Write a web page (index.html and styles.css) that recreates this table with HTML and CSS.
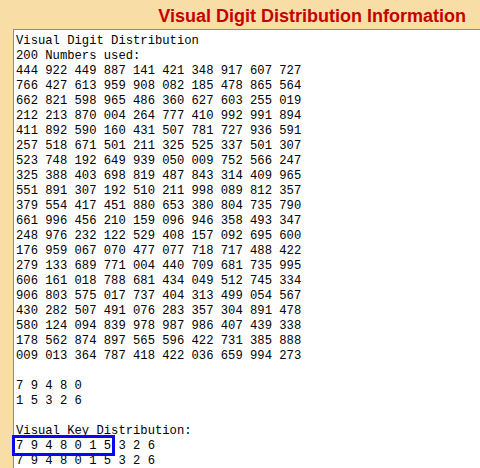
FILE: index.html
```html
<!DOCTYPE html>
<html>
<head>
<meta charset="utf-8">
<link rel="stylesheet" href="styles.css">
</head>
<body>
<div class="title">Visual Digit Distribution Information</div>
<div class="panel"><pre class="out">Visual Digit Distribution
200 Numbers used:
444 922 449 887 141 421 348 917 607 727
766 427 613 959 908 082 185 478 865 564
662 821 598 965 486 360 627 603 255 019
212 213 870 004 264 777 410 992 991 894
411 892 590 160 431 507 781 727 936 591
257 518 671 501 211 325 525 337 501 307
523 748 192 649 939 050 009 752 566 247
325 388 403 698 819 487 843 314 409 965
551 891 307 192 510 211 998 089 812 357
379 554 417 451 880 653 380 804 735 790
661 996 456 210 159 096 946 358 493 347
248 976 232 122 529 408 157 092 695 600
176 959 067 070 477 077 718 717 488 422
279 133 689 771 004 440 709 681 735 995
606 161 018 788 681 434 049 512 745 334
906 803 575 017 737 404 313 499 054 567
430 282 507 491 076 283 357 304 891 478
580 124 094 839 978 987 986 407 439 338
178 562 874 897 565 596 422 731 385 888
009 013 364 787 418 422 036 659 994 273

7 9 4 8 0
1 5 3 2 6

Visual Key Distribution:
<span class="hl">7 9 4 8 0 1 5</span> 3 2 6
7 9 4 8 0 1 5 3 2 6
</pre></div>
</body>
</html>
```
FILE: styles.css
```css
html, body {
  margin: 0;
  padding: 0;
  background: #f9dda6;
  overflow: hidden;
}
.title {
  box-sizing: border-box;
  height: 29px;
  padding: 6px 14px 0 0;
  text-align: right;
  font-family: "Liberation Sans", Arial, sans-serif;
  font-weight: bold;
  font-size: 18px;
  line-height: 21px;
  color: #c40000;
}
.panel {
  margin-left: 13px;
  margin-right: -40px;
  background: #ffffff;
  border: 1px solid #8c8c8c;
  padding: 4px 0 60px 2px;
}
.out {
  margin: 0;
  font-family: "Liberation Mono", "DejaVu Sans Mono", monospace;
  font-size: 12.2px;
  line-height: 15px;
  color: #000;
}
.hl {
  position: relative;
}
.hl::after {
  content: "";
  position: absolute;
  left: -4px;
  right: -4px;
  top: -4px;
  bottom: -3px;
  border: 3px solid #0a0ae8;
}
```
